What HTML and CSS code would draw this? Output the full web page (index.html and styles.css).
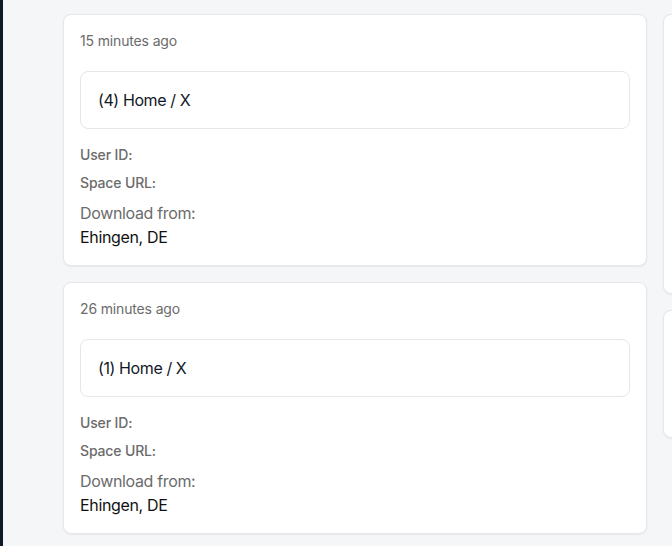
FILE: index.html
```html
<!DOCTYPE html>
<html lang="en">
<head>
<meta charset="utf-8">
<title>Downloads</title>
<link rel="stylesheet" href="styles.css">
</head>
<body>
<div class="app">
  <aside class="sidebar"></aside>
  <main class="main">
    <div class="column">
      <article class="card">
        <div class="time">15 minutes ago</div>
        <div class="title-box">(4) Home / X</div>
        <div class="meta">User ID:</div>
        <div class="meta">Space URL:</div>
        <div class="from">
          <div class="from-label">Download from:</div>
          <div class="from-value">Ehingen, DE</div>
        </div>
      </article>
      <article class="card">
        <div class="time">26 minutes ago</div>
        <div class="title-box">(1) Home / X</div>
        <div class="meta">User ID:</div>
        <div class="meta">Space URL:</div>
        <div class="from">
          <div class="from-label">Download from:</div>
          <div class="from-value">Ehingen, DE</div>
        </div>
      </article>
    </div>
    <div class="column">
      <article class="card side-tall"></article>
      <article class="card side-short"></article>
    </div>
  </main>
</div>
</body>
</html>
```

FILE: styles.css
```css
* { box-sizing: border-box; }
html, body { margin: 0; padding: 0; }
body {
  font-family: Inter, "Noto Sans", "Liberation Sans", sans-serif;
  background: #f5f6f8;
  overflow: hidden;
  width: 672px;
  height: 546px;
}
.app {
  display: flex;
  width: 672px;
  height: 546px;
  overflow: hidden;
}
.sidebar {
  width: 3px;
  flex: none;
  background: #111827;
}
.main {
  flex: 1;
  min-width: 0;
  overflow: hidden;
  display: flex;
  gap: 16px;
  padding: 14px 0 0 60px;
}
.column {
  width: 584px;
  flex: none;
  display: flex;
  flex-direction: column;
  gap: 16px;
}
.card {
  background: #fff;
  border: 1px solid #e5e7eb;
  border-radius: 8px;
  box-shadow: 0 1px 2px rgba(0,0,0,0.06);
  padding: 16px;
  display: flex;
  flex-direction: column;
}
.time {
  font-size: 14px;
  line-height: 20px;
  color: #6b6b6b;
  letter-spacing: -0.15px;
}
.title-box {
  margin-top: 20px;
  border: 1px solid #e5e7eb;
  border-radius: 8px;
  padding: 16px 17px;
  font-size: 16px;
  line-height: 24px;
  color: #111827;
  letter-spacing: -0.4px;
}
.meta {
  font-size: 14px;
  line-height: 20px;
  font-weight: 500;
  color: #6b6b6b;
  margin-top: 8px;
  letter-spacing: -0.15px;
}
.title-box + .meta { margin-top: 16px; }
.from { margin-top: 8px; letter-spacing: -0.35px; }
.from-label {
  font-size: 16px;
  line-height: 24px;
  color: #6b6b6b;
}
.from-value {
  font-size: 16px;
  line-height: 24px;
  color: #111;
}
.side-tall { height: 280px; }
.side-short { height: 128px; }
```
